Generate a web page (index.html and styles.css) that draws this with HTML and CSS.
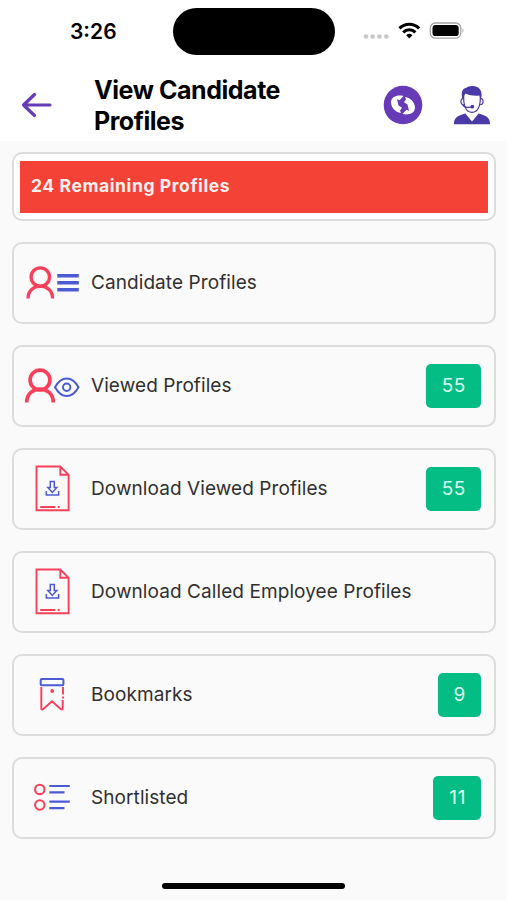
FILE: index.html
```html
<!DOCTYPE html>
<html lang="en">

<head>
    <meta charset="UTF-8">
    <meta name="viewport" content="width=device-width, initial-scale=1.0">
    <title>View Candidate Profiles</title>
    <link rel="stylesheet" href="styles.css">
</head>

<body>
    <header>
        <!-- Status bar -->
        <div class="status-bar">
            <span class="time">3:26</span>
            <div class="island"></div>
            <svg class="status-icons" width="104" height="24" viewBox="0 0 104 24">
                <g fill="#c8c8c8">
                    <circle cx="3" cy="17.5" r="2.3"/>
                    <circle cx="9.7" cy="17.5" r="2.3"/>
                    <circle cx="16.5" cy="17.5" r="2.3"/>
                    <circle cx="23.3" cy="17.5" r="2.3"/>
                </g>
                <g fill="none" stroke="#000" stroke-width="3.1">
                    <path d="M36.5 9.3a13.8 13.8 0 0 1 19.6 0"/>
                    <path d="M40.2 13.3a8.6 8.6 0 0 1 12.2 0"/>
                </g>
                <path d="M46.3 19.4l-3.1-3.2a4.6 4.6 0 0 1 6.2 0z"/>
                <rect x="67.3" y="4" width="30.5" height="15.2" rx="5" fill="none" stroke="#a4a4a4" stroke-width="1.3"/>
                <rect x="69.5" y="6.1" width="26.2" height="11" rx="3.2"/>
                <path d="M99.5 9v5q2-2.5 0-5z" fill="#a4a4a4"/>
            </svg>
        </div>

        <!-- Title bar -->
        <div class="title-bar">
            <svg class="back" width="32" height="30" viewBox="0 0 32 30">
                <path d="M30 15H4M14.5 4.5L3.5 15 14.5 25.5" fill="none" stroke="#673ab7" stroke-width="3.2" stroke-linecap="round" stroke-linejoin="round"/>
            </svg>
            <h1>View Candidate Profiles</h1>
            <svg class="refresh" width="40" height="40" viewBox="0 0 40 40">
                <circle cx="20" cy="20" r="19.3" fill="#673ab7"/>
                <path d="M20.5 11C14 9.5 8 12 8 17.5c.2 5 4 9.500 10 10.500l-1-2.500 2-2.700-3.500-2.300-1.500-6.500 2.500 1.300z" fill="#fff"/>
                <path d="M19.5 29C26 30.500 32 28 32 22.500c-.2-5-4-9.500-10-10.500l1 2.500-2 2.700 3.500 2.300 1.500 6.500-2.500-1.300z" fill="#fff"/>
            </svg>
            <svg class="support" width="38" height="40" viewBox="0 0 38 40">
                <g fill="#4a3aa7">
                    <path d="M9.3 14.5C7.8 7 9.5 3.5 13.5 2.8 16 0 28.5-.5 28.6 9.5c0 2-.3 3.5-.8 5.3L26.3 10.500C22 11 16.5 10.500 12.500 8.500z"/>
                    <path d="M1 39.3c0-6 2-8 11.3-10.800L19 36.500l6.700-8C35 31.300 37 33.300 37 39.300z"/>
                    <circle cx="19.3" cy="21.700" r="1.900"/>
                </g>
                <g fill="none" stroke="#4a3aa7" stroke-width="1.2">
                    <path d="M10.7 11c-.3 8 1.300 16.300 8.300 16.300S27.600 19 27.300 11"/>
                    <path d="M10.3 13.700c-3.200-.8-3.400 6.300.5 6M27.700 13.700c3.200-.8 3.400 6.300-.5 6M9.500 19.500c1.500 3 5 3.500 9.500 2.300"/>
                </g>
            </svg>
        </div>
    </header>

    <main>
        <div class="card remaining">
            <div class="remaining-label">24 Remaining Profiles</div>
        </div>

        <div class="card">
            <svg class="icon" width="60" height="50" viewBox="0 0 60 50">
                <g class="red" stroke-width="3.3">
                    <circle cx="18.3" cy="19" r="9.2"/>
                    <path d="M6 40.5c0-16.500 24.600-16.500 24.600 0"/>
                </g>
                <path class="blue" stroke-width="3.5" d="M35.3 17.7h21.500M35.300 24.700h21.500M35.300 31.700h21.500"/>
            </svg>
            <span class="label">Candidate Profiles</span>
        </div>

        <div class="card">
            <svg class="icon" width="60" height="50" viewBox="0 0 60 50">
                <g class="red" stroke-width="3.7">
                    <circle cx="18" cy="19" r="9.900"/>
                    <path d="M4.700 41.500c0-17.800 26.600-17.800 26.600 0"/>
                </g>
                <g class="blue" stroke-width="2">
                    <path d="M33 26.300C39.500 14.700 50 14.700 56.500 26.300 50 37.900 39.500 37.900 33 26.300z"/>
                    <circle cx="44.700" cy="26.300" r="3.700"/>
                </g>
            </svg>
            <span class="label">Viewed Profiles</span>
            <span class="count">55</span>
        </div>

        <div class="card">
            <svg class="icon" width="60" height="50" viewBox="0 0 60 50">
                <path class="red" stroke-width="1.9" d="M14.500 2.500h23.800l8.300 8.300v35.500H14.500zM38.300 2.500v8.300h8.300M18.200 43h15.300M35.700 43h2"/>
                <path class="blue" stroke-width="1.5" d="M28.300 17.500h4v6h2.500l-4.500 5-4.500-5h2.500zM24.300 27v4h12.300v-4"/>
            </svg>
            <span class="label">Download Viewed Profiles</span>
            <span class="count">55</span>
        </div>

        <div class="card">
            <svg class="icon" width="60" height="50" viewBox="0 0 60 50">
                <path class="red" stroke-width="1.9" d="M14.500 2.500h23.800l8.300 8.300v35.500H14.500zM38.300 2.500v8.300h8.300M18.200 43h15.300M35.700 43h2"/>
                <path class="blue" stroke-width="1.5" d="M28.300 17.500h4v6h2.500l-4.500 5-4.500-5h2.500zM24.300 27v4h12.300v-4"/>
            </svg>
            <span class="label">Download Called Employee Profiles</span>
        </div>

        <div class="card">
            <svg class="icon" width="60" height="50" viewBox="0 0 60 50">
                <rect class="blue" stroke-width="2" x="18.7" y="9" width="22.7" height="6.3" rx="1"/>
                <path class="red" stroke-width="1.9" d="M19.300 17v21.500q.3 1.700 2 .5l8.700-7.700 8.700 7.700q1.800 1.200 2-.5V30M41 28.500v-2M41 24.500V17"/>
                <circle cx="30.2" cy="21" r="1.9" fill="#f8405a"/>
            </svg>
            <span class="label">Bookmarks</span>
            <span class="count">9</span>
        </div>

        <div class="card">
            <svg class="icon" width="60" height="50" viewBox="0 0 60 50">
                <g class="red" stroke-width="2.1">
                    <circle cx="17.8" cy="16.4" r="4.7"/>
                    <circle cx="17.8" cy="32" r="4.7"/>
                </g>
                <path class="blue" stroke-width="2.2" d="M27.300 13h20.500M27.300 19.400h15.200M27.300 28.700h20.500M27.300 35.100h15.200"/>
            </svg>
            <span class="label">Shortlisted</span>
            <span class="count">11</span>
        </div>
    </main>

    <div class="home-indicator"></div>
</body>

</html>
```

FILE: styles.css
```css
* {
    box-sizing: border-box;
}

body {
    display: flex;
    flex-direction: column;
    height: 900px;
    margin: 0;
    background-color: #fafafa;
    font-family: Inter, "Liberation Sans", sans-serif;
    color: #303030;
}

header {
    height: 141px;
    background-color: #fff;
    color: #000;
}

/* Status bar */
.status-bar {
    display: flex;
    height: 63px;
    padding-top: 8px;
}

.time {
    width: 103px;
    margin-left: 70px;
    padding-top: 11px;
    font-size: 21px;
    font-weight: 600;
    line-height: 26px;
}

.island {
    width: 162px;
    height: 47px;
    border-radius: 24px;
    background-color: #000;
}

.status-icons {
    margin: 11px 0 0 28px;
}

/* Title bar */
.title-bar {
    display: flex;
    align-items: center;
    height: 84px;
    padding-left: 20px;
}

h1 {
    width: 230px;
    margin: 2px 0 0 42px;
    font-size: 25px;
    font-weight: 650;
    line-height: 31px;
    letter-spacing: -0.45px;
}

.refresh {
    margin-left: 59px;
}

.support {
    margin-left: 30px;
}

/* Cards */
main {
    display: flex;
    flex: 1;
    flex-direction: column;
    gap: 21px;
    padding: 11px 11px 0 12px;
}

.card {
    display: flex;
    align-items: center;
    height: 82px;
    padding: 0 13px 0 8px;
    border: 2px solid #dcdcdc;
    border-radius: 10px;
}

.remaining {
    height: 69px;
    padding: 6px;
    background-color: #fff;
}

.remaining-label {
    flex: 1;
    height: 52px;
    padding-left: 11px;
    background-color: #f44336;
    color: #fff0ee;
    font-size: 17.5px;
    font-weight: 650;
    line-height: 50px;
    letter-spacing: 0.6px;
}

.label {
    flex: 1;
    margin: -2px 0 0 9px;
    font-size: 19px;
    letter-spacing: 0.08px;
    white-space: nowrap;
}

.count {
    height: 44px;
    padding: 0 15px 0 16px;
    border-radius: 5px;
    background-color: #03bd85;
    color: #d9fff0;
    font-size: 19px;
    line-height: 44px;
    letter-spacing: 0.6px;
}

.red,
.blue {
    fill: none;
}

.red {
    stroke: #f8405a;
}

.blue {
    stroke: #4c5bd4;
}

.home-indicator {
    width: 183px;
    height: 6px;
    margin: 0 auto 11px 162px;
    border-radius: 3px;
    background-color: #000;
}
```
